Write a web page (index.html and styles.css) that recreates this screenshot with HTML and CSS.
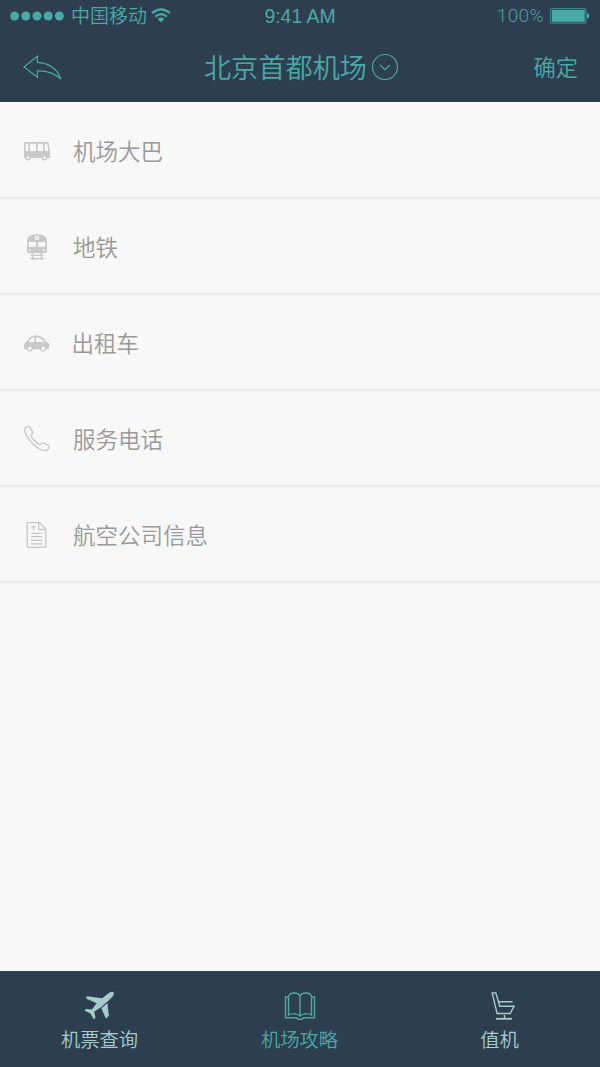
FILE: index.html
```html
<!DOCTYPE html>
<html lang="zh-CN">
<head>
<meta charset="utf-8">
<title>北京首都机场</title>
<link rel="stylesheet" href="styles.css">
</head>
<body>
<div class="app">
  <header class="header">
    <div class="status">
      <div class="carrier">
        <svg class="signal" width="54" height="10" viewBox="0 0 54 10"><circle cx="4.6" cy="5" r="4.5"/><circle cx="15.8" cy="5" r="4.5"/><circle cx="27" cy="5" r="4.5"/><circle cx="38.2" cy="5" r="4.5"/><circle cx="49.4" cy="5" r="4.5"/></svg>
        <span class="carrier-name">中国移动</span>
        <svg class="wifi" width="20" height="15" viewBox="0 0 20 15"><path class="wave" d="M1 5.2Q10-2.6 19 5.2M4.2 8.6Q10 3.8 15.8 8.6"/><path class="dot" d="M6.6 11Q10 8.2 13.4 11L10 14.4Z"/></svg>
      </div>
      <span class="time">9:41 AM</span>
      <div class="battery">
        <span class="percent">100%</span>
        <svg width="40" height="16" viewBox="0 0 40 16"><rect class="case" x=".6" y=".6" width="35.5" height="14.6" rx="1.5"/><rect class="charge" x="2" y="2" width="32.8" height="11.8"/><path class="charge" d="M37 5Q39.6 6.2 39.6 7.9T37 10.8Z"/></svg>
      </div>
    </div>
    <nav class="navbar">
      <svg class="back" width="40" height="26" viewBox="0 0 40 26"><path d="M1 12L14.4 1.2V7.4C26 8 34 14 38 24C31 18 24 15.6 14.4 16V22Z"/></svg>
      <div class="title">
        <h1>北京首都机场</h1>
        <svg class="drop" width="28" height="28" viewBox="0 0 28 28"><circle cx="14" cy="14" r="12.5"/><path d="M9 12L14 16.7L19 12"/></svg>
      </div>
      <span class="confirm">确定</span>
    </nav>
  </header>
  <ul class="list">
    <li class="row">
      <svg class="icon" width="28" height="28" viewBox="0 0 28 28"><path class="fill" fill-rule="evenodd" d="M1 5H25.5L27 14V21H1ZM2.7 6.7V14H5.3V6.7ZM7 6.7V14H13V6.7ZM14.7 6.7V14H20V6.7ZM21.7 6.7V14H25.3L24.2 6.7Z"/><circle class="wheel" cx="5.2" cy="20.7" r="2.1"/><circle class="wheel" cx="21.7" cy="20.7" r="2.1"/></svg>
      <span>机场大巴</span>
    </li>
    <li class="row">
      <svg class="icon" width="28" height="28" viewBox="0 0 28 28"><path class="fill" fill-rule="evenodd" d="M4 19V8Q4 3.4 8.5 2.2Q14-.2 19.5 2.2Q24 3.4 24 8V19Q24 20.2 22.5 20.2H5.5Q4 20.2 4 19ZM5.8 9V13.8H13V9ZM15 9V13.8H22.2V9ZM14 2.4A2.3 2.3 0 1 0 14 7A2.3 2.3 0 1 0 14 2.4ZM7 16A1 1 0 1 0 7 18A1 1 0 1 0 7 16ZM21 16A1 1 0 1 0 21 18A1 1 0 1 0 21 16Z"/><circle class="fill" cx="14" cy="4.7" r="1"/><path class="line" d="M8 22.3H20M7 25.7H21M9.5 20V27M18.5 20V27"/></svg>
      <span>地铁</span>
    </li>
    <li class="row row-taxi">
      <svg class="icon" width="28" height="28" viewBox="0 0 28 28"><path class="fill" fill-rule="evenodd" d="M1 19C1 14.5 2.3 13.2 4 12.3C6 8.8 8.5 6.6 13 6.6C18 6.6 21 9 22.8 12.5C25.3 13.3 26.3 14.5 26.3 16.5Q26.3 19.8 24.5 20.3H2.5Q1 20.3 1 19ZM11.5 8.2Q7.5 8.5 5.7 13H11.5ZM13 8.2V13H21Q18.5 8.4 13 8.2Z"/><circle class="wheel" cx="6.8" cy="19.3" r="2.5"/><circle class="wheel" cx="20.2" cy="19.3" r="2.5"/></svg>
      <span>出租车</span>
    </li>
    <li class="row">
      <svg class="icon" width="28" height="28" viewBox="0 0 28 28"><path class="line" d="M2.1 2.8C3.3 1.5 5.5 1 6.8 2.2L9.5 6.3C10.2 8 9.2 9.2 8 10.2C8.2 12.8 14.2 19.2 17 19.8C18 18.4 19.2 17.5 20.8 18.1L25.3 20.3C27 21.6 26 24 24 25.1C20.8 26.7 15 23.9 10.2 19.3C5.2 14.3.3 6.4 2.1 2.8Z"/></svg>
      <span>服务电话</span>
    </li>
    <li class="row">
      <svg class="icon" width="28" height="28" viewBox="0 0 28 28"><path class="line" d="M5.2 1.6H16.5L22.8 8V25.7Q22.8 26.4 22 26.4H5.2Q4.2 26.4 4.2 25.5V2.5Q4.2 1.6 5.2 1.6ZM15.7 1.8V8.5H22.5M8.2 5.6H12.8M10.5 5.6V9M8 12.3H19.5M8 15.7H19.5M8 19.3H19.5M8 22.8H19.5"/></svg>
      <span>航空公司信息</span>
    </li>
  </ul>
  <nav class="tabs">
    <div class="tab">
      <svg width="32" height="30" viewBox="0 0 32 30"><path class="solid" d="M25.5 1.6Q28.6.2 29.6 1.4Q30.4 3 28.6 5.4L24.4 9.8L16.4 16.8L10.3 20.6L11.4 27L9.9 28.3L6.3 22.6L.6 19.6L1.9 18L8 18.5L12.6 12.2L2.2 7.4L2.7 5.2L18.3 7.2Z"/><path class="solid" d="M17.4 17.2L23.4 12L24.8 24.5L22 27.8Z"/></svg>
      <span>机票查询</span>
    </div>
    <div class="tab active">
      <svg width="32" height="30" viewBox="0 0 32 30"><path class="stroke" d="M16 5.5Q15 2 10.2 2Q5.5 2 4.5 5.5V24Q6.5 22.6 10 22.6Q13.5 22.6 16 25Q18.5 22.6 22 22.6Q25.5 22.6 27.5 24V5.5Q26.5 2 21.8 2Q17 2 16 5.5V25M4.3 6H1.5V26.7H12.7Q13.3 28.2 14.5 28.2H17.5Q18.7 28.2 19.3 26.7H30.5V6H27.7"/></svg>
      <span>机场攻略</span>
    </div>
    <div class="tab">
      <svg width="32" height="30" viewBox="0 0 32 30"><path class="stroke" d="M8.2 1.9H11.8L15.8 15.3H30L26.2 22.5H13.1ZM15 10.7H28.5M20.5 24V27"/><path class="base" d="M12 27.8H28"/></svg>
      <span>值机</span>
    </div>
  </nav>
</div>
</body>
</html>
```
FILE: styles.css
```css
* { box-sizing: border-box; }
body {
  margin: 0;
  font-family: "Liberation Sans", "Noto Sans CJK SC", sans-serif;
  background: #f8f8f8;
}
.app { display: flex; flex-direction: column; height: 1067px; }
svg { display: block; flex: none; fill: none; }
.header { height: 102px; background: #2d3e50; color: #49aaa5; }
.status {
  display: grid;
  grid-template-columns: 1fr auto 1fr;
  align-items: center;
  height: 31px;
  padding: 0 10px;
  font-size: 19px;
  line-height: 30px;
}
.carrier { display: flex; align-items: center; }
.signal { fill: #49aaa5; }
.carrier-name { margin: 0 4px 1px 7px; line-height: 28px; font-family: "Noto Sans CJK SC", sans-serif; font-weight: 350; }
.wave { stroke: #49aaa5; stroke-width: 2.2; }
.dot, .charge { fill: #49aaa5; }
.time { font-size: 19.4px; }
.battery { display: flex; justify-content: flex-end; align-items: center; gap: 6px; }
.percent { color: #49a09d; font-family: Roboto, sans-serif; font-weight: 300; letter-spacing: .4px; }
.case { stroke: #3a8585; stroke-width: 1.2; }
.navbar {
  display: grid;
  grid-template-columns: 1fr auto 1fr;
  align-items: center;
  height: 70px;
  padding: 0 22px 0 23px;
  font-family: "Noto Sans CJK SC", sans-serif;
  font-weight: 350;
}
.back { margin-top: 4px; }
.back, .drop { stroke: #49aaa5; stroke-width: 1.2; }
.drop { margin-top: 2px; }
.title { display: flex; align-items: center; gap: 4px; padding-left: 2px; }
h1 { margin: 0; font-size: 27.2px; font-weight: 350; line-height: 40px; }
.confirm { justify-self: end; font-size: 22.3px; }
.list { flex: 1; margin: 0; padding: 1px 0 0; list-style: none; }
.row {
  display: flex;
  align-items: center;
  gap: 22px;
  height: 96px;
  padding: 2px 23px 0;
  border-bottom: 2px solid #ececec;
  color: #999;
  font-family: "Noto Sans CJK SC", sans-serif;
  font-size: 22.5px;
  font-weight: 350;
}
.row span { line-height: 32px; padding-bottom: 2px; }
.row-taxi { gap: 20.5px; }
.fill { fill: #c9c9c9; }
.wheel { fill: #f8f8f8; stroke: #c6c6c6; stroke-width: 1.3; }
.line { stroke: #c6c6c6; stroke-width: 1.3; }
.tabs {
  display: grid;
  grid-template-columns: repeat(3, 1fr);
  height: 96px;
  background: #2d3e50;
  font-family: "Noto Sans CJK SC", sans-serif;
  font-size: 19.3px;
  font-weight: 350;
}
.tab {
  display: flex;
  flex-direction: column;
  align-items: center;
  gap: 3px;
  padding-top: 20px;
  color: #a5cdce;
  line-height: 30px;
}
.tab span { margin-right: 1px; }
.active { color: #49aaa5; }
.solid { fill: #a5cdce; }
.stroke, .base { stroke: currentColor; stroke-width: 1.4; }
.base { stroke-width: 1.8; }
```
